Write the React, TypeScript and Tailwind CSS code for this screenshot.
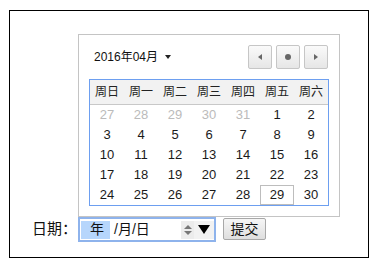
import React from "react";

const weeks = ["周日", "周一", "周二", "周三", "周四", "周五", "周六"];
const days: { d: number; muted?: boolean; sel?: boolean }[] = [
  { d: 27, muted: true }, { d: 28, muted: true }, { d: 29, muted: true }, { d: 30, muted: true }, { d: 31, muted: true }, { d: 1 }, { d: 2 },
  ...Array.from({ length: 28 }, (_, i) => ({ d: i + 3, sel: i + 3 === 29 })),
];

function NavBtn({ children }: { children: React.ReactNode }) {
  return (
    <div className="w-[24px] h-[24px] rounded-[2px] border border-[#c6c6c6] bg-gradient-to-b from-[#fafafa] to-[#e6e6e6] flex items-center justify-center">
      {children}
    </div>
  );
}

export default function App() {
  return (
    <div className="w-[381px] h-[269px] bg-white pt-[10px] pl-[9px]" style={{ fontFamily: '"Liberation Sans", "Noto Sans CJK SC", sans-serif' }}>
      <div className="w-[360px] h-[248px] border border-black flex flex-col">
        <div className="ml-[68px] mt-[23px] w-[262px] h-[183px] border border-[#c4c4c4] p-[10px] flex flex-col">
          <div className="h-[24px] flex items-center justify-between mb-[10px]">
            <div className="flex items-center pl-[5px] text-[12px] text-[#111]">
              <span>2016年04月</span>
              <svg width="6" height="4" viewBox="0 0 6 4" className="ml-[7px]"><path d="M0 0h6L3 4z" fill="#222" /></svg>
            </div>
            <div className="flex gap-[4px] pr-[1px]">
              <NavBtn><svg width="4" height="6" viewBox="0 0 4 6"><path d="M4 0v6L0 3z" fill="#666" /></svg></NavBtn>
              <NavBtn><svg width="6" height="6" viewBox="0 0 6 6"><circle cx="3" cy="3" r="3" fill="#666" /></svg></NavBtn>
              <NavBtn><svg width="4" height="6" viewBox="0 0 4 6"><path d="M0 0v6l4-3z" fill="#666" /></svg></NavBtn>
            </div>
          </div>
          <div className="w-[240px] h-[127px] border border-[#6d9ff0] flex flex-col">
            <div className="h-[25px] bg-[#f2f2f2] border-b border-[#c8c8c8] grid grid-cols-7 text-[12px] text-[#222]">
              {weeks.map((w) => (
                <div key={w} className="flex items-center justify-center">{w}</div>
              ))}
            </div>
            <div className="grid grid-cols-7 text-[13px]">
              {days.map((x, i) => (
                <div
                  key={i}
                  className={`h-[20px] flex items-center justify-center ${x.muted ? "text-[#bbbbbb]" : "text-[#1a1a1a]"} ${x.sel ? "border border-[#bdbdbd]" : ""}`}
                >
                  {x.d}
                </div>
              ))}
            </div>
          </div>
        </div>
        <div className="flex items-start pl-[22px]">
          <span className="w-[46px] h-[25px] flex items-center text-[15px] text-[#111]">日期：</span>
          <div className="w-[138px] h-[25px] border-2 border-[#8eb3ec] flex items-center pl-[1px] text-[14px] text-[#111]">
            <span className="w-[29px] h-[18px] bg-[#b6d6fc] flex items-center justify-end pr-[6px]">年</span>
            <span className="ml-[4px]">/月/日</span>
            <div className="ml-auto flex h-[18px]">
              <div className="w-[13px] bg-[#ececec] flex flex-col items-center justify-center gap-[2px]">
                <svg width="8" height="4" viewBox="0 0 8 4"><path d="M0 4L4 0L8 4z" fill="#777" /></svg>
                <svg width="8" height="4" viewBox="0 0 8 4"><path d="M0 0L4 4L8 0z" fill="#777" /></svg>
              </div>
              <div className="w-[20px] bg-[#f2f2f2] flex items-center justify-center">
                <svg width="12" height="9" viewBox="0 0 12 9"><path d="M0 0h12L6 9z" fill="#000" /></svg>
              </div>
            </div>
          </div>
          <button className="ml-[7px] mt-[1px] w-[43px] h-[22px] border border-[#a8a8a8] rounded-[2px] bg-gradient-to-b from-[#f6f6f6] to-[#dedede] text-[14px] text-[#111] flex items-center justify-center">
            提交
          </button>
        </div>
      </div>
    </div>
  );
}
